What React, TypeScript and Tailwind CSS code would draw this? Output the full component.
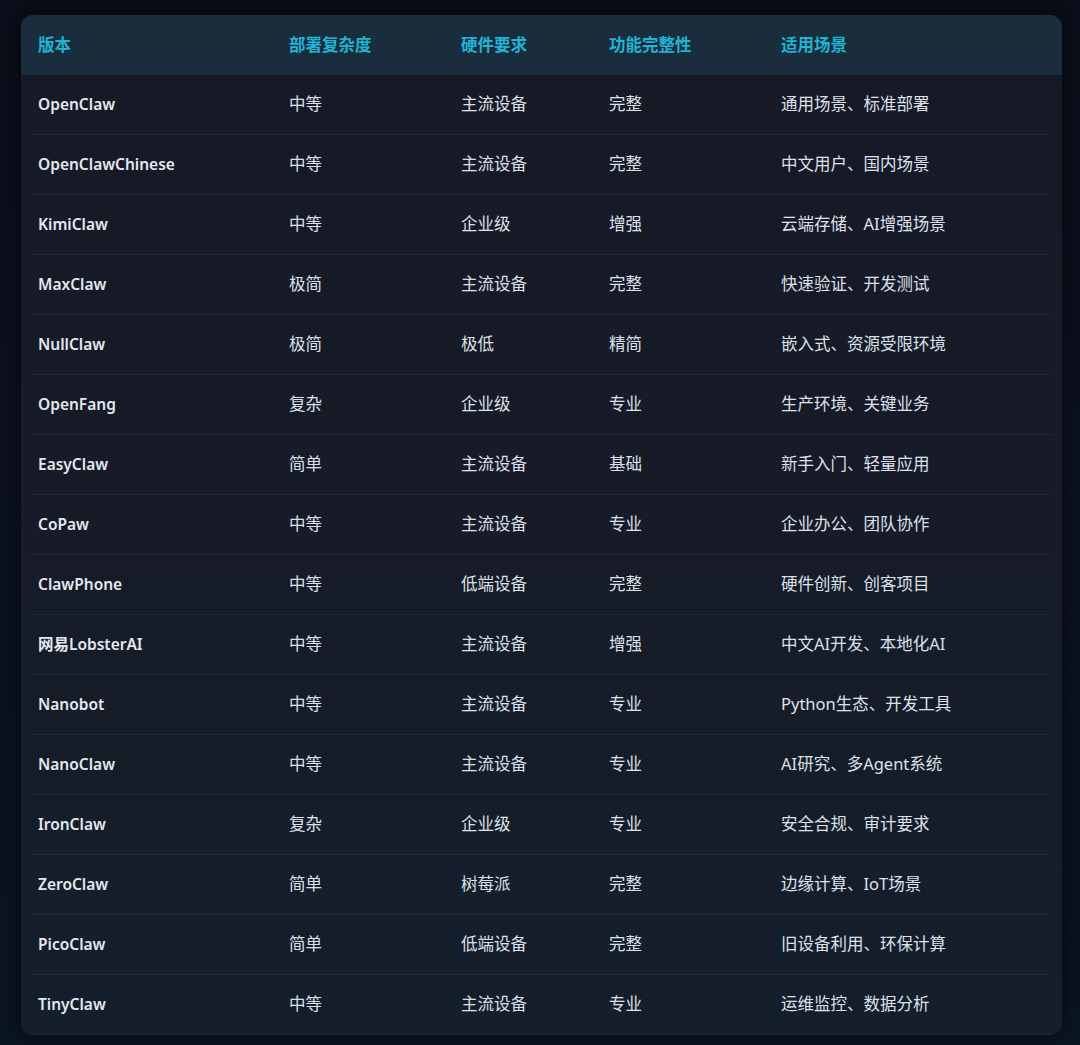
const rows: Array<[string, string, string, string, string]> = [
  ["OpenClaw", "中等", "主流设备", "完整", "通用场景、标准部署"],
  ["OpenClawChinese", "中等", "主流设备", "完整", "中文用户、国内场景"],
  ["KimiClaw", "中等", "企业级", "增强", "云端存储、AI增强场景"],
  ["MaxClaw", "极简", "主流设备", "完整", "快速验证、开发测试"],
  ["NullClaw", "极简", "极低", "精简", "嵌入式、资源受限环境"],
  ["OpenFang", "复杂", "企业级", "专业", "生产环境、关键业务"],
  ["EasyClaw", "简单", "主流设备", "基础", "新手入门、轻量应用"],
  ["CoPaw", "中等", "主流设备", "专业", "企业办公、团队协作"],
  ["ClawPhone", "中等", "低端设备", "完整", "硬件创新、创客项目"],
  ["网易LobsterAI", "中等", "主流设备", "增强", "中文AI开发、本地化AI"],
  ["Nanobot", "中等", "主流设备", "专业", "Python生态、开发工具"],
  ["NanoClaw", "中等", "主流设备", "专业", "AI研究、多Agent系统"],
  ["IronClaw", "复杂", "企业级", "专业", "安全合规、审计要求"],
  ["ZeroClaw", "简单", "树莓派", "完整", "边缘计算、IoT场景"],
  ["PicoClaw", "简单", "低端设备", "完整", "旧设备利用、环保计算"],
  ["TinyClaw", "中等", "主流设备", "专业", "运维监控、数据分析"],
];

const headers = ["版本", "部署复杂度", "硬件要求", "功能完整性", "适用场景"];
const cols = "grid grid-cols-[251px_172px_148px_172px_1fr]";

export default function App() {
  return (
    <div
      className="min-h-[1045px] w-[1080px] bg-gradient-to-b from-[#0b0e1a] via-[#0c1220] to-[#0a1622] pt-[15px] pl-[21px] pr-[18px]"
      style={{ fontFamily: '"Noto Sans", "Noto Sans CJK SC", sans-serif' }}
    >
      <div className="overflow-hidden rounded-xl bg-gradient-to-b from-[#171a26] via-[#161b27] to-[#141f2b] shadow-[0_0_24px_rgba(0,0,0,0.6)]">
        <div className={`${cols} h-[60px] items-center bg-[#1a2d3c] pl-[17px] text-[16.5px] font-bold text-[#20b4d6]`}>
          {headers.map((h) => (
            <div key={h}>{h}</div>
          ))}
        </div>
        {rows.map((r) => (
          <div key={r[0]} className="mx-[10px] border-b border-[#ffffff0d]">
            <div className={`${cols} h-[59px] items-center pl-[7px] text-[16.5px] text-[#dde2ea]`}>
              <div className="text-[15.5px] font-semibold text-[#e4e8ee]">{r[0]}</div>
              <div>{r[1]}</div>
              <div>{r[2]}</div>
              <div>{r[3]}</div>
              <div>{r[4]}</div>
            </div>
          </div>
        ))}
      </div>
    </div>
  );
}
